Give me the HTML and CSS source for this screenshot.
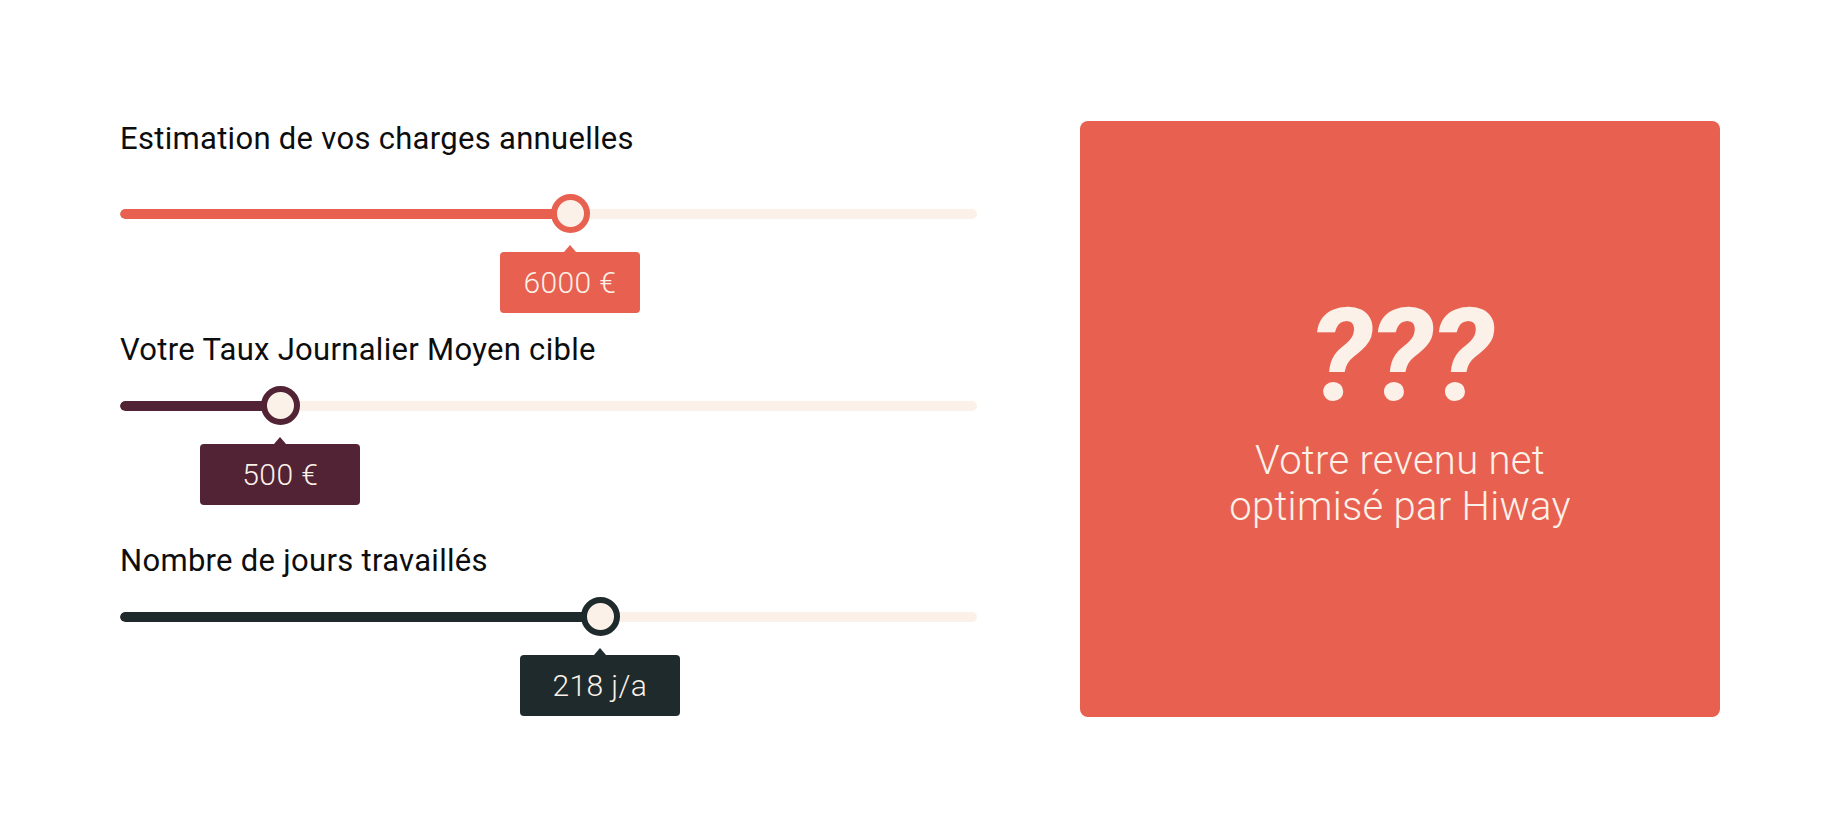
FILE: index.html
```html
<!DOCTYPE html>
<html lang="fr">
<head>
<meta charset="utf-8">
<title>Simulateur Hiway</title>
<link rel="stylesheet" href="styles.css">
</head>
<body>
<div class="page">
	<div class="controls">
		<div class="field field_first">
			<div class="field_label">Estimation de vos charges annuelles</div>
			<div class="slider slider_coral" style="--p: 52.5%">
				<div class="slider_track"><div class="slider_fill"></div></div>
				<div class="slider_thumb"></div>
				<div class="slider_tip tip_small">6000 €</div>
			</div>
		</div>
		<div class="field">
			<div class="field_label">Votre Taux Journalier Moyen cible</div>
			<div class="slider slider_wine" style="--p: 18.7%">
				<div class="slider_track"><div class="slider_fill"></div></div>
				<div class="slider_thumb"></div>
				<div class="slider_tip">500 €</div>
			</div>
		</div>
		<div class="field">
			<div class="field_label">Nombre de jours travaillés</div>
			<div class="slider slider_dark" style="--p: 56%">
				<div class="slider_track"><div class="slider_fill"></div></div>
				<div class="slider_thumb"></div>
				<div class="slider_tip">218 j/a</div>
			</div>
		</div>
	</div>
	<div class="result">
		<div class="result_value">???</div>
		<div class="result_text">Votre revenu net<br>optimisé par Hiway</div>
	</div>
</div>
</body>
</html>
```

FILE: styles.css
```css
* {margin: 0; padding: 0; box-sizing: border-box;}
body {background: #fff; color: #0d0d0d; font-family: Roboto, "Liberation Sans", sans-serif;}

.page {display: flex; gap: 103px; padding: 121px 0 0 120px;}

.controls {width: 857px;}
.field {height: 211px;}
.field_label {font-size: 31px; line-height: 36px; font-weight: 400; letter-spacing: 0.3px;}

.slider {position: relative; height: 38px; margin-top: 19px;}
.field_first .slider {margin-top: 38px;}
.slider_track {position: absolute; left: 0; right: 0; top: 14px; height: 10px; border-radius: 5px; background: #fbf1e8; overflow: hidden;}
.slider_fill {height: 100%; width: var(--p); border-radius: 5px;}
.slider_thumb {position: absolute; top: 0; left: var(--p); width: 39px; height: 39px; margin-left: -19px; margin-top: -1px; border-radius: 50%; border: 6px solid; background: #fbf1e8;}

.slider_tip {position: absolute; top: 57px; left: var(--p); width: 160px; margin-left: -80px; height: 61px; line-height: 61px; border-radius: 4px; text-align: center; font-size: 30px; font-weight: 300; letter-spacing: 0.4px; color: #fbf1e8;}
.slider_tip:before {content: ""; position: absolute; top: -7px; left: 50%; margin-left: -6px; border-left: 6px solid transparent; border-right: 6px solid transparent; border-bottom: 7px solid; border-bottom-color: inherit;}
.tip_small {width: 140px; margin-left: -70px;}

.slider_coral .slider_fill, .slider_coral .slider_tip {background: #e76050;}
.slider_coral .slider_thumb, .slider_coral .slider_tip {border-color: #e76050;}
.slider_wine .slider_fill, .slider_wine .slider_tip {background: #522334;}
.slider_wine .slider_thumb, .slider_wine .slider_tip {border-color: #522334;}
.slider_dark .slider_fill, .slider_dark .slider_tip {background: #1e2a2b;}
.slider_dark .slider_thumb, .slider_dark .slider_tip {border-color: #1e2a2b;}

.result {width: 640px; height: 596px; border-radius: 8px; background: #e76050; color: #fbf1e8; display: flex; flex-direction: column; align-items: center; justify-content: center; text-align: center;}
.result_value {font-size: 130px; line-height: 112px; font-weight: 700; font-style: italic; letter-spacing: -2px; margin-top: -8px;}
.result_text {margin-top: 26px; font-size: 40px; line-height: 46px; font-weight: 300; letter-spacing: 0.3px;}
```
